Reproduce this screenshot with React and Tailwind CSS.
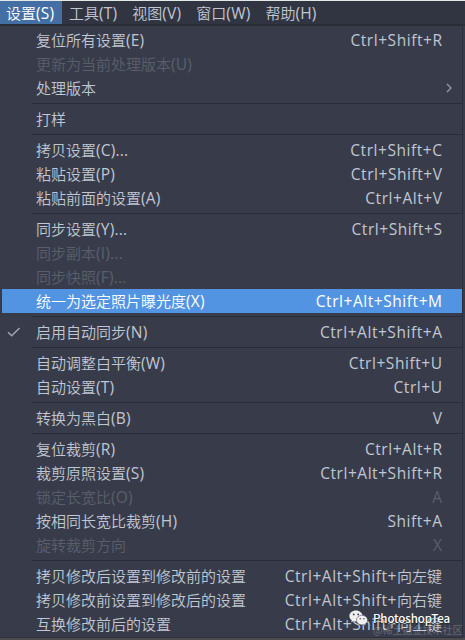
const menus = ['设置(S)', '工具(T)', '视图(V)', '窗口(W)', '帮助(H)'];

const groups = [
  [
    { label: '复位所有设置(E)', keys: 'Ctrl+Shift+R' },
    { label: '更新为当前处理版本(U)', disabled: true },
    { label: '处理版本', submenu: true },
  ],
  [{ label: '打样' }],
  [
    { label: '拷贝设置(C)...', keys: 'Ctrl+Shift+C' },
    { label: '粘贴设置(P)', keys: 'Ctrl+Shift+V' },
    { label: '粘贴前面的设置(A)', keys: 'Ctrl+Alt+V' },
  ],
  [
    { label: '同步设置(Y)...', keys: 'Ctrl+Shift+S' },
    { label: '同步副本(I)...', disabled: true },
    { label: '同步快照(F)...', disabled: true },
    { label: '统一为选定照片曝光度(X)', keys: 'Ctrl+Alt+Shift+M', active: true },
  ],
  [{ label: '启用自动同步(N)', keys: 'Ctrl+Alt+Shift+A', checked: true }],
  [
    { label: '自动调整白平衡(W)', keys: 'Ctrl+Shift+U' },
    { label: '自动设置(T)', keys: 'Ctrl+U' },
  ],
  [{ label: '转换为黑白(B)', keys: 'V' }],
  [
    { label: '复位裁剪(R)', keys: 'Ctrl+Alt+R' },
    { label: '裁剪原照设置(S)', keys: 'Ctrl+Alt+Shift+R' },
    { label: '锁定长宽比(O)', keys: 'A', disabled: true },
    { label: '按相同长宽比裁剪(H)', keys: 'Shift+A' },
    { label: '旋转裁剪方向', keys: 'X', disabled: true },
  ],
  [
    { label: '拷贝修改后设置到修改前的设置', keys: 'Ctrl+Alt+Shift+向左键' },
    { label: '拷贝修改前设置到修改后的设置', keys: 'Ctrl+Alt+Shift+向右键' },
    { label: '互换修改前后的设置', keys: 'Ctrl+Alt+Shift+向上键' },
  ],
];

// The access key after the Chinese name is set slightly larger
function Label({ text }) {
  const [name, rest] = text.split('(');
  return (
    <>
      {name}
      {rest && <span className="text-[15.5px] leading-none font-normal tracking-[0.2px]">({rest}</span>}
    </>
  );
}

function Shortcut({ keys }) {
  const [, latin, arrow] = keys.match(/^([\x20-\x7e]*)(.*)$/);
  return (
    <span>
      <span className={`text-[15.5px] leading-none font-normal tracking-[0.55px] ${arrow ? '' : '-mr-[0.55px]'}`}>{latin}</span>
      {arrow}
    </span>
  );
}

function MenuItem({ item }) {
  const color = item.active ? 'bg-[#5294e2] text-white' : item.disabled ? 'text-[#595f6a]' : 'text-[#c0c7d3]';
  return (
    <div className={`flex h-6 items-center pr-5 ${color}`}>
      <span className="flex w-[34px] shrink-0 pl-[5px]">
        {item.checked && (
          <svg className="h-3 w-3.5" viewBox="0 0 14 12" fill="none" stroke="#a0a6b2" strokeWidth="1.5">
            <path d="M1 6.2 4.7 9.8 12.5 2" />
          </svg>
        )}
      </span>
      <span className="grow">
        <Label text={item.label} />
      </span>
      {item.keys && <Shortcut keys={item.keys} />}
      {item.submenu && (
        <svg className="-mr-[10px] h-2.5 w-1.5" viewBox="0 0 6 10" fill="none" stroke="#969ca8" strokeWidth="1.3">
          <path d="M1 1 5 5 1 9" />
        </svg>
      )}
    </div>
  );
}

function WeChatIcon() {
  return (
    <svg className="h-[17px] w-[19px]" viewBox="0 0 19 17">
      <path fill="#f0f0f0" d="M7 .5C3.2.5.4 2.9.4 6c0 1.800 1 3.300 2.400 4.300l-.6 2 2.300-1.200c.8.2 1.600.3 2.500.3 3.700 0 6.600-2.400 6.600-5.400S10.700.5 7 .5Z" />
      <path fill="#f0f0f0" stroke="#383c4a" strokeWidth=".5" d="M13 5.300c-3.100 0-5.600 2.100-5.600 4.800s2.500 4.800 5.600 4.800c.7 0 1.300-.1 1.900-.3l2 1.200-.5-1.900c1.300-.9 2.200-2.200 2.200-3.800 0-2.700-2.500-4.800-5.600-4.800Z" />
      <g fill="#383c4a">
        <circle cx="4.700" cy="4.400" r=".9" />
        <circle cx="9.200" cy="4.400" r=".9" />
        <circle cx="11.200" cy="8.700" r=".7" />
        <circle cx="14.900" cy="8.700" r=".7" />
      </g>
    </svg>
  );
}

export default function App() {
  return (
    <div className="relative flex h-[640px] w-[465px] flex-col overflow-hidden bg-[#383c4a] font-['Open_Sans','Noto_Sans_CJK_SC',sans-serif] text-[15px] leading-6 font-[350] whitespace-nowrap">
      <div className="h-px shrink-0 bg-[#e4e9e8]" />

      {/* Menu bar */}
      <div className="flex h-[25px] shrink-0 border-b-2 border-[#292d37] bg-[#313541] text-[#c0c7d3]">
        {menus.map((name, i) => (
          <span key={name} className={i === 0 ? 'w-[62px] bg-[#436fa5] pl-1.5 text-white' : 'pr-2 pl-[7px]'}>
            <Label text={name} />
          </span>
        ))}
      </div>

      {/* Dropdown */}
      <div className="mr-0.5 flex h-[612px] shrink-0 flex-col border-r border-b border-[#2c303b] pt-0.5 pl-0.5">
        {groups.map((items, i) => (
          <div key={i}>
            {i > 0 && (
              <div className="flex h-[7px] items-center pl-[30px]">
                <div className="h-px grow bg-[#292d37]" />
              </div>
            )}
            {items.map((item) => (
              <MenuItem key={item.label} item={item} />
            ))}
          </div>
        ))}
      </div>
      <div className="h-0.5 shrink-0 bg-[#4b4b50]" />

      {/* Watermarks */}
      <div className="absolute top-[610px] left-[349px] flex items-start gap-[5px] text-white">
        <WeChatIcon />
        <span className="font-['Noto_Sans_CJK_SC',sans-serif] text-[11.5px] leading-[17px] font-medium tracking-[-0.1px] [text-shadow:0_1px_1px_#222]">
          PhotoshopTea
        </span>
      </div>
      <span className="absolute top-[622px] left-[373px] font-['Noto_Sans_CJK_SC',sans-serif] text-[10px] leading-4 font-normal text-white/25">
        @稀土掘金技术社区
      </span>
    </div>
  );
}
